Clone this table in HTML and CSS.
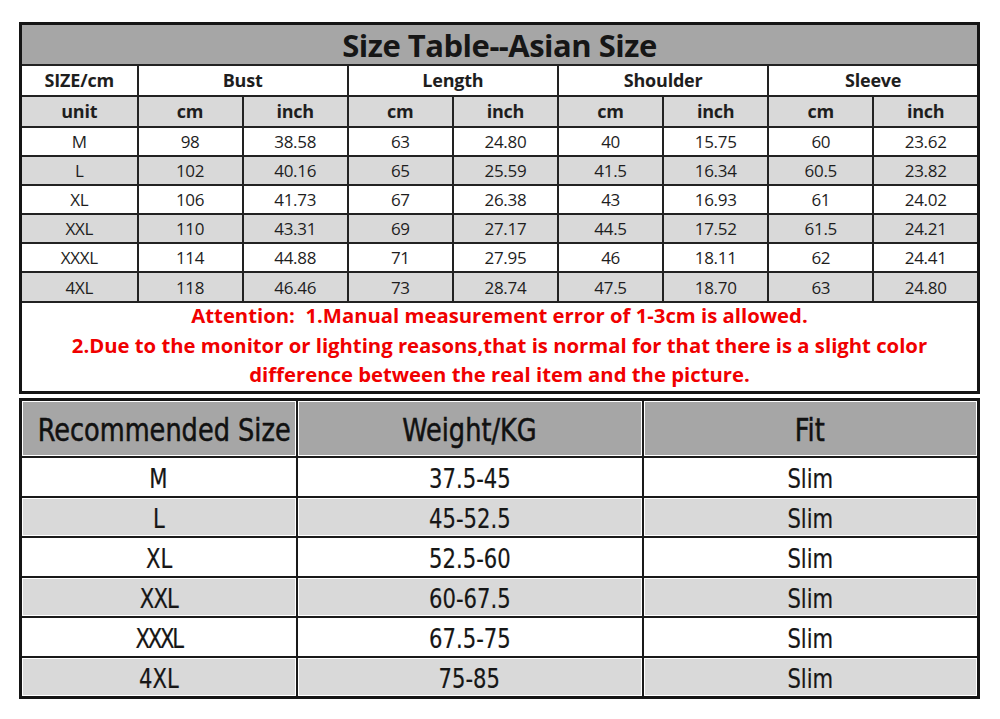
FILE: index.html
```html
<!DOCTYPE html>
<html>
<head>
<meta charset="utf-8">
<link rel="stylesheet" href="styles.css">
</head>
<body>
<div class="page">
  <table class="size">
    <colgroup>
      <col class="c-first">
      <col><col><col><col><col><col><col><col>
    </colgroup>
    <tr class="title"><td colspan="9">Size Table--Asian Size</td></tr>
    <tr class="head white"><td>SIZE/cm</td><td colspan="2">Bust</td><td colspan="2">Length</td><td colspan="2">Shoulder</td><td colspan="2">Sleeve</td></tr>
    <tr class="head gray"><td>unit</td><td>cm</td><td>inch</td><td>cm</td><td>inch</td><td>cm</td><td>inch</td><td>cm</td><td>inch</td></tr>
    <tr class="data white"><td>M</td><td>98</td><td>38.58</td><td>63</td><td>24.80</td><td>40</td><td>15.75</td><td>60</td><td>23.62</td></tr>
    <tr class="data gray"><td>L</td><td>102</td><td>40.16</td><td>65</td><td>25.59</td><td>41.5</td><td>16.34</td><td>60.5</td><td>23.82</td></tr>
    <tr class="data white"><td>XL</td><td>106</td><td>41.73</td><td>67</td><td>26.38</td><td>43</td><td>16.93</td><td>61</td><td>24.02</td></tr>
    <tr class="data gray"><td>XXL</td><td>110</td><td>43.31</td><td>69</td><td>27.17</td><td>44.5</td><td>17.52</td><td>61.5</td><td>24.21</td></tr>
    <tr class="data white"><td>XXXL</td><td>114</td><td>44.88</td><td>71</td><td>27.95</td><td>46</td><td>18.11</td><td>62</td><td>24.41</td></tr>
    <tr class="data gray"><td>4XL</td><td>118</td><td>46.46</td><td>73</td><td>28.74</td><td>47.5</td><td>18.70</td><td>63</td><td>24.80</td></tr>
    <tr class="note"><td colspan="9">
      <p>Attention:&nbsp; 1.Manual measurement error of 1-3cm is allowed.</p>
      <p>2.Due to the monitor or lighting reasons,that is normal for that there is a slight color</p>
      <p>difference between the real item and the picture.</p>
    </td></tr>
  </table>

  <table class="rec">
    <colgroup>
      <col class="r1"><col class="r2"><col class="r3">
    </colgroup>
    <tr class="rhead"><td><span>Recommended Size</span></td><td><span>Weight/KG</span></td><td><span>Fit</span></td></tr>
    <tr class="white"><td><span>M</span></td><td><span>37.5-45</span></td><td><span>Slim</span></td></tr>
    <tr class="gray"><td><span>L</span></td><td><span>45-52.5</span></td><td><span>Slim</span></td></tr>
    <tr class="white"><td><span>XL</span></td><td><span>52.5-60</span></td><td><span>Slim</span></td></tr>
    <tr class="gray"><td><span class="tight">XXL</span></td><td><span>60-67.5</span></td><td><span>Slim</span></td></tr>
    <tr class="white"><td><span class="tighter">XXXL</span></td><td><span>67.5-75</span></td><td><span>Slim</span></td></tr>
    <tr class="gray"><td><span>4XL</span></td><td><span>75-85</span></td><td><span>Slim</span></td></tr>
  </table>
</div>
</body>
</html>
```

FILE: styles.css
```css
html, body {
  margin: 0;
  padding: 0;
  background: #ffffff;
}

.page {
  padding: 22px 0 0 19px;
}

table {
  border-collapse: collapse;
  table-layout: fixed;
  width: 961px;
  color: #1e1e1e;
}

td {
  padding: 0;
  text-align: center;
  vertical-align: middle;
  line-height: 1;
}

/* ---------- top size table ---------- */
.size {
  border: 3px solid #151515;
  font-family: "Open Sans", "Liberation Sans", sans-serif;
}

.size td {
  border: 2px solid #222;
}

.c-first {
  width: 117px;
}

.title td {
  background: #a6a6a6;
  height: 41px;
  font-size: 31px;
  font-weight: 700;
  letter-spacing: -0.5px;
  color: #161616;
  padding-top: 2px;
  box-sizing: border-box;
}

.head td {
  height: 29px;
  font-size: 18px;
  font-weight: 700;
  letter-spacing: -0.2px;
}

.data td {
  height: 27.2px;
  font-size: 17px;
  font-weight: 400;
  letter-spacing: -0.3px;
}

.white td {
  background: #ffffff;
}

.gray td {
  background: #d9d9d9;
}

.note td {
  height: 88px;
  background: #ffffff;
  color: #f00000;
  font-weight: 700;
  font-size: 20.3px;
}

.note p {
  margin: 0;
  line-height: 29.5px;
}

.note p:first-child {
  margin-top: -2px;
}

/* ---------- recommended table ---------- */
.rec {
  margin-top: 4px;
  border: 3px solid #151515;
  font-family: "DejaVu Sans Condensed", "DejaVu Sans", sans-serif;
  color: #161616;
}

.rec td {
  border: 2px solid #1a1a1a;
  height: 35px;
  padding-top: 3px;
  font-size: 27px;
  white-space: nowrap;
  box-shadow: inset 0 0 0 1px #ffffff;
  -webkit-text-stroke: 0.2px #161616;
}

.rec span {
  display: inline-block;
  transform: scaleX(0.87);
}

.rec .tight {
  letter-spacing: -1px;
}

.rec .tighter {
  letter-spacing: -2.5px;
}

.r1 {
  width: 276px;
}

.r2 {
  width: 346px;
}

.rhead td {
  background: #a6a6a6;
  height: 51px;
  padding-top: 4px;
  font-size: 32px;
  color: #111;
  -webkit-text-stroke: 0.5px #111;
}

.rhead span {
  transform: scaleX(0.89);
}
```
